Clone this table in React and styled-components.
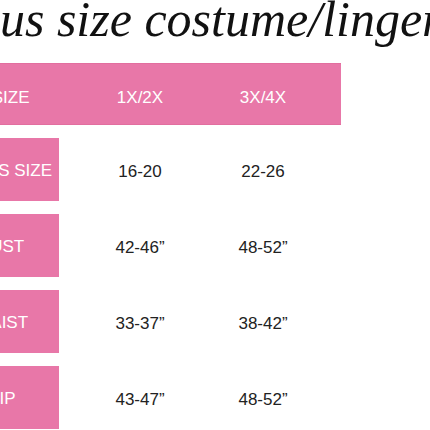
import React from 'react';
import styled, { createGlobalStyle } from 'styled-components';

const PINK = '#e877a8';

const rows = [
  { label: 'DRESS SIZE', values: ['16-20', '22-26'] },
  { label: 'BUST', values: ['42-46”', '48-52”'] },
  { label: 'WAIST', values: ['33-37”', '38-42”'] },
  { label: 'HIP', values: ['43-47”', '48-52”'] }
];

export default function App() {
  return (
    <>
      <GlobalStyle />
      <Page>
        <Title>Plus size costume/lingerie</Title>
        <HeaderBar>
          <HeadCell first>US SIZE</HeadCell>
          <HeadCell>1X/2X</HeadCell>
          <HeadCell>3X/4X</HeadCell>
        </HeaderBar>
        {rows.map((row) => (
          <Row key={row.label}>
            <Label>{row.label}</Label>
            {row.values.map((v, i) => (
              <Value key={i}>{v}</Value>
            ))}
          </Row>
        ))}
      </Page>
    </>
  );
}

const GlobalStyle = createGlobalStyle`
  html, body {
    margin: 0;
    padding: 0;
    background: #fff;
    width: 430px;
    height: 430px;
    overflow: hidden;
  }
`;

const Page = styled.div`
  margin-left: -56px;
  width: 520px;
  display: flex;
  flex-direction: column;
  gap: 13px;
  font-family: 'Liberation Sans', Arial, sans-serif;
`;

const Title = styled.h1`
  margin: -6px 0 6px 11.5px;
  font-family: 'Liberation Serif', 'Times New Roman', serif;
  font-style: italic;
  font-weight: 400;
  font-size: 50px;
  line-height: 50px;
  color: #111;
  white-space: nowrap;
`;

const grid = `
  display: grid;
  grid-template-columns: 134.5px 123px 123px;
  align-items: center;
`;

const HeaderBar = styled.div`
  ${grid}
  width: 397px;
  height: 62px;
  box-sizing: border-box;
  padding-top: 7px;
  background: ${PINK};
  border-top: 1px solid #e26e9f;
  border-bottom: 1px solid #e26e9f;
`;

const HeadCell = styled.div`
  color: #fff;
  font-size: 17px;
  text-align: center;
  padding-right: ${(p) => (p.first ? '29.5px' : '0')};
`;

const Row = styled.div`
  ${grid}
  height: 63px;
`;

const Label = styled.div`
  width: 115px;
  height: 100%;
  box-sizing: border-box;
  padding-top: 3px;
  background: ${PINK};
  color: #fff;
  font-size: 17px;
  display: flex;
  align-items: center;
  justify-content: center;
  white-space: nowrap;
`;

const Value = styled.div`
  padding-top: 4px;
  color: #222;
  font-size: 17px;
  text-align: center;
`;
